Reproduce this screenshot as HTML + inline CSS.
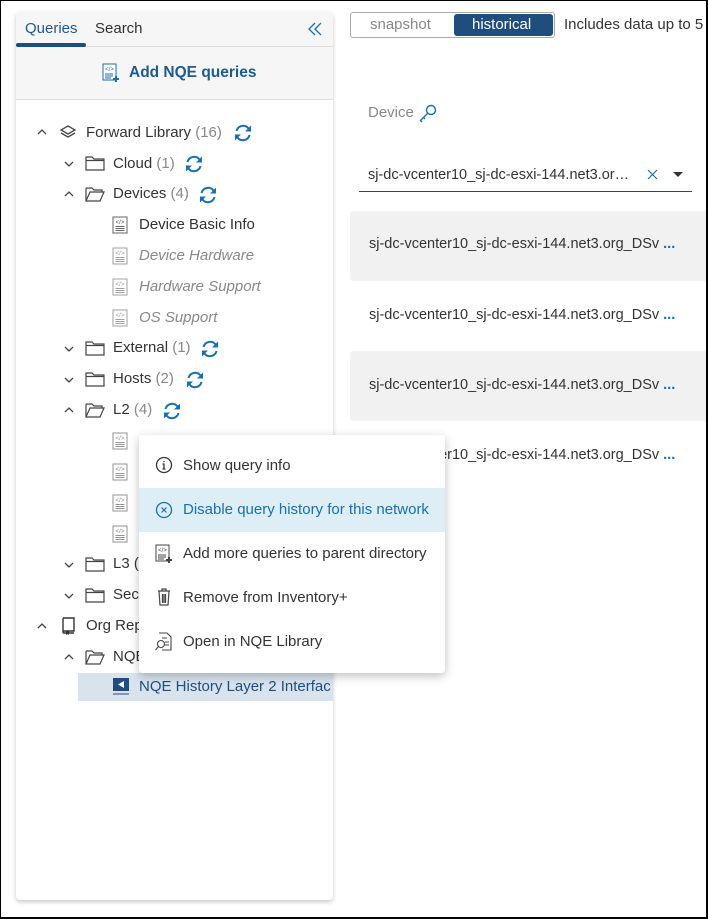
<!DOCTYPE html>
<html><head><meta charset="utf-8"><style>
*{box-sizing:border-box;margin:0;padding:0}
body{width:708px;height:919px;background:#fff;font-family:"Liberation Sans",sans-serif;position:relative;overflow:hidden;color:#333}
.frame{position:absolute;left:0;top:0;width:708px;height:919px;border:1px solid #000;border-right-width:2px;border-bottom-width:2px;z-index:50;pointer-events:none}
.panel{position:absolute;left:16px;top:12px;width:317px;height:888px;background:#fff;border-radius:4px;box-shadow:0 2px 5px rgba(0,0,0,.22);overflow:hidden}
.tabs{position:absolute;left:0;top:0;width:317px;height:35px;background:#f6f6f6;border-bottom:1px solid #ddd}
.tab{position:absolute;top:8px;font-size:15px}
.add{position:absolute;left:0;top:35px;width:317px;height:53px;background:#f6f6f6;border-bottom:1px solid #ddd}
.t{position:absolute;font-size:15px;line-height:18px;white-space:nowrap}
.g{color:#888}
.it{font-style:italic;color:#888}
.ico{position:absolute}
.row{position:absolute;left:350px;width:358px;height:70px;border-radius:3px}
.rt{position:absolute;left:369px;font-size:14.5px;color:#333;white-space:nowrap}
.menu{position:absolute;left:139px;top:435px;width:306px;height:238px;background:#fff;border-radius:4px;box-shadow:0 3px 10px rgba(0,0,0,.25);z-index:10}
.mi{position:absolute;left:0;width:306px;height:44px}
.mi span{position:absolute;left:44px;top:13px;font-size:15px;white-space:nowrap;color:#333}
</style></head><body>
<svg width="0" height="0" style="position:absolute"><defs>
<symbol id="sync" viewBox="0 0 20 20"><path d="M3.5 8A6.8 6.8 0 0 1 15.5 5.5M16.5 12A6.8 6.8 0 0 1 4.5 14.5" fill="none" stroke="#1a6fb0" stroke-width="2"/><path d="M18 2.5v6h-6z" fill="#1a6fb0"/><path d="M2 17.5v-6h6z" fill="#1a6fb0"/></symbol>
<symbol id="doc" viewBox="0 0 16 18"><rect x="1" y="1" width="14" height="16" fill="#fff" stroke="#666" stroke-width="1"/><text x="8" y="8" font-size="6" text-anchor="middle" fill="#555" font-family="Liberation Sans">&lt;/&gt;</text><path d="M3.5 10.5h9M3.5 12.5h9M3.5 14.5h9" stroke="#666" stroke-width="1"/></symbol>
<symbol id="fold" viewBox="0 0 20 16"><path d="M1 2h6l2 2h10v11H1z" fill="none" stroke="#444" stroke-width="1.2"/><path d="M1 5.5h18" stroke="#444" stroke-width="1.2"/></symbol>
<symbol id="fopen" viewBox="0 0 20 16"><path d="M1 2h6l2 2h8v2" fill="none" stroke="#444" stroke-width="1.2"/><path d="M1 2v13h14l4-9H5L1 15" fill="none" stroke="#444" stroke-width="1.2"/></symbol>
<symbol id="down" viewBox="0 0 10 6"><path d="M1 1l4 4 4-4" fill="none" stroke="#444" stroke-width="1.3"/></symbol>
<symbol id="up" viewBox="0 0 10 6"><path d="M1 5l4-4 4 4" fill="none" stroke="#444" stroke-width="1.3"/></symbol>
</defs></svg>

<div class="panel">
 <div class="tabs">
  <div class="tab" style="left:9px;color:#1f5a8c">Queries</div>
  <div style="position:absolute;left:0;top:31px;width:70px;height:4px;background:#1f4e7e;border-radius:2px"></div>
  <div class="tab" style="left:79px;color:#333">Search</div>
  <svg style="position:absolute;left:292px;top:10px" width="14" height="14" viewBox="0 0 14 14"><path d="M7 1L1 7l6 6M13 1L7 7l6 6" fill="none" stroke="#1a6fb0" stroke-width="1.3"/></svg>
 </div>
 <div class="add">
  <svg style="position:absolute;left:86px;top:16px" width="18" height="20" viewBox="0 0 18 20"><rect x="1" y="1" width="13" height="16" fill="#fff" stroke="#1a6fb0"/><text x="7.5" y="8" font-size="6" text-anchor="middle" fill="#1a6fb0">&lt;/&gt;</text><path d="M3 11h8M3 13h8M3 15h6" stroke="#1a6fb0"/><path d="M14 13v6M11 16h6" stroke="#1a6fb0" stroke-width="2"/></svg>
  <div class="t" style="left:113px;top:17px;color:#1f5a8c;font-weight:bold;font-size:15.5px">Add NQE queries</div>
 </div>
</div>

<!-- tree -->
<svg class="ico" style="left:37px;top:129px" width="10" height="6"><use href="#up"/></svg>
<svg class="ico" style="left:59px;top:124px" width="18" height="16" viewBox="0 0 18 16"><path d="M9 2l7 4-7 4-7-4z M2 9l7 4 7-4" fill="none" stroke="#444" stroke-width="1.3"/></svg>
<div class="t" style="left:86px;top:124px">Forward Library <span class="g">(16)</span></div>
<svg class="ico" style="left:233px;top:123px" width="20" height="20"><use href="#sync"/></svg>

<svg class="ico" style="left:64px;top:161px" width="10" height="6"><use href="#down"/></svg>
<svg class="ico" style="left:85px;top:155px" width="20" height="16"><use href="#fold"/></svg>
<div class="t" style="left:113px;top:155px">Cloud <span class="g">(1)</span></div>
<svg class="ico" style="left:184px;top:154px" width="20" height="20"><use href="#sync"/></svg>

<svg class="ico" style="left:64px;top:191px" width="10" height="6"><use href="#up"/></svg>
<svg class="ico" style="left:85px;top:186px" width="20" height="16"><use href="#fopen"/></svg>
<div class="t" style="left:113px;top:185px">Devices <span class="g">(4)</span></div>
<svg class="ico" style="left:198px;top:185px" width="20" height="20"><use href="#sync"/></svg>

<svg class="ico" style="left:112px;top:216px" width="16" height="18"><use href="#doc"/></svg>
<div class="t" style="left:139px;top:216px">Device Basic Info</div>
<svg class="ico" style="left:112px;top:247px" width="16" height="18" opacity=".6"><use href="#doc"/></svg>
<div class="t it" style="left:139px;top:247px">Device Hardware</div>
<svg class="ico" style="left:112px;top:278px" width="16" height="18" opacity=".6"><use href="#doc"/></svg>
<div class="t it" style="left:139px;top:278px">Hardware Support</div>
<svg class="ico" style="left:112px;top:309px" width="16" height="18" opacity=".6"><use href="#doc"/></svg>
<div class="t it" style="left:139px;top:309px">OS Support</div>

<svg class="ico" style="left:64px;top:346px" width="10" height="6"><use href="#down"/></svg>
<svg class="ico" style="left:85px;top:340px" width="20" height="16"><use href="#fold"/></svg>
<div class="t" style="left:113px;top:339px">External <span class="g">(1)</span></div>
<svg class="ico" style="left:200px;top:339px" width="20" height="20"><use href="#sync"/></svg>

<svg class="ico" style="left:64px;top:377px" width="10" height="6"><use href="#down"/></svg>
<svg class="ico" style="left:85px;top:371px" width="20" height="16"><use href="#fold"/></svg>
<div class="t" style="left:113px;top:370px">Hosts <span class="g">(2)</span></div>
<svg class="ico" style="left:185px;top:370px" width="20" height="20"><use href="#sync"/></svg>

<svg class="ico" style="left:64px;top:407px" width="10" height="6"><use href="#up"/></svg>
<svg class="ico" style="left:85px;top:402px" width="20" height="16"><use href="#fopen"/></svg>
<div class="t" style="left:113px;top:401px">L2 <span class="g">(4)</span></div>
<svg class="ico" style="left:162px;top:401px" width="20" height="20"><use href="#sync"/></svg>

<svg class="ico" style="left:112px;top:432px" width="16" height="18" opacity=".7"><use href="#doc"/></svg>
<svg class="ico" style="left:112px;top:463px" width="16" height="18" opacity=".7"><use href="#doc"/></svg>
<svg class="ico" style="left:112px;top:494px" width="16" height="18" opacity=".7"><use href="#doc"/></svg>
<svg class="ico" style="left:112px;top:525px" width="16" height="18" opacity=".7"><use href="#doc"/></svg>

<svg class="ico" style="left:64px;top:562px" width="10" height="6"><use href="#down"/></svg>
<svg class="ico" style="left:85px;top:556px" width="20" height="16"><use href="#fold"/></svg>
<div class="t" style="left:113px;top:555px">L3 (</div>
<svg class="ico" style="left:64px;top:593px" width="10" height="6"><use href="#down"/></svg>
<svg class="ico" style="left:85px;top:587px" width="20" height="16"><use href="#fold"/></svg>
<div class="t" style="left:113px;top:586px">Sec</div>

<svg class="ico" style="left:37px;top:623px" width="10" height="6"><use href="#up"/></svg>
<svg class="ico" style="left:61px;top:617px" width="14" height="18" viewBox="0 0 14 18"><path d="M2 1h11v13H3a1 1 0 0 0 0 2h10M2 1v14" fill="none" stroke="#333" stroke-width="1.4"/><path d="M5 14v4l1.5-1 1.5 1v-4" fill="#333"/></svg>
<div class="t" style="left:86px;top:617px">Org Rep</div>

<svg class="ico" style="left:64px;top:654px" width="10" height="6"><use href="#up"/></svg>
<svg class="ico" style="left:85px;top:649px" width="20" height="16"><use href="#fopen"/></svg>
<div class="t" style="left:113px;top:648px">NQE</div>

<div style="position:absolute;left:78px;top:673px;width:255px;height:28px;background:#d9e3ee"></div>
<svg class="ico" style="left:112px;top:677px" width="18" height="20" viewBox="0 0 18 20"><rect x="1" y="1" width="16" height="13" fill="#1f4e7e"/><path d="M12 4v7l-6-3.5z" fill="#fff"/><path d="M1 17h16" stroke="#1f4e7e" stroke-width="1"/></svg>
<div class="t" style="left:139px;top:678px;color:#1f4e7e">NQE History Layer 2 Interfac</div>

<!-- right -->
<div style="position:absolute;left:350px;top:12px;width:205px;height:26px;border:1px solid #aaa;border-radius:3px"></div>
<div style="position:absolute;left:454px;top:14px;width:99px;height:22px;background:#1f4e7e;border-radius:3px"></div>
<div class="t" style="left:370px;top:16px;color:#888">snapshot</div>
<div class="t" style="left:472px;top:16px;color:#fff">historical</div>
<div class="t" style="left:564px;top:16px;color:#333">Includes data up to 5</div>

<div class="t" style="left:368px;top:104px;color:#888">Device</div>
<svg class="ico" style="left:418px;top:103px" width="20" height="20" viewBox="0 0 20 20"><circle cx="13" cy="7" r="4.5" fill="none" stroke="#1a6fb0" stroke-width="1.4"/><path d="M10 10L2.5 17.5l1.5 1.5M5.5 14.5l1.5 1.5" fill="none" stroke="#1a6fb0" stroke-width="1.4"/></svg>

<div class="t" style="left:368px;top:166px;font-size:14.5px">sj-dc-vcenter10_sj-dc-esxi-144.net3.or…</div>
<svg class="ico" style="left:647px;top:169px" width="11" height="11"><path d="M1 1l9 9M10 1l-9 9" stroke="#1a6fb0" stroke-width="1.2"/></svg>
<svg class="ico" style="left:673px;top:172px" width="10" height="6"><path d="M0 0h10L5 5z" fill="#333"/></svg>
<div style="position:absolute;left:359px;top:191px;width:333px;height:1px;background:#1f4e7e"></div>

<div class="row" style="top:211px;background:#f1f1f1"></div>
<div class="row" style="top:351px;background:#f1f1f1"></div>
<div class="rt" style="top:236px">sj-dc-vcenter10_sj-dc-esxi-144.net3.org_DSv <b style="color:#1a6fb0">...</b></div>
<div class="rt" style="top:307px">sj-dc-vcenter10_sj-dc-esxi-144.net3.org_DSv <b style="color:#1a6fb0">...</b></div>
<div class="rt" style="top:377px">sj-dc-vcenter10_sj-dc-esxi-144.net3.org_DSv <b style="color:#1a6fb0">...</b></div>
<div class="rt" style="top:447px">sj-dc-vcenter10_sj-dc-esxi-144.net3.org_DSv <b style="color:#1a6fb0">...</b></div>

<!-- menu -->
<div class="menu">
 <div class="mi" style="top:9px"><svg style="position:absolute;left:16px;top:12px" width="18" height="18" viewBox="0 0 18 18"><circle cx="9" cy="9" r="7.5" fill="none" stroke="#333" stroke-width="1.3"/><path d="M9 5v1M7.5 8H9v5M7.5 13h3" stroke="#333" stroke-width="1.3" fill="none"/></svg><span>Show query info</span></div>
 <div class="mi" style="top:53px;background:#ddeef7"><svg style="position:absolute;left:16px;top:13px" width="18" height="18" viewBox="0 0 18 18"><circle cx="9" cy="9" r="7.5" fill="none" stroke="#1a6fb0" stroke-width="1.3"/><path d="M6.5 6.5l5 5M11.5 6.5l-5 5" stroke="#1a6fb0" stroke-width="1.2"/></svg><span style="color:#1a6fb0">Disable query history for this network</span></div>
 <div class="mi" style="top:97px"><svg style="position:absolute;left:16px;top:12px" width="18" height="20" viewBox="0 0 18 20"><rect x="1" y="1" width="13" height="16" fill="#fff" stroke="#444"/><text x="7.5" y="8" font-size="6" text-anchor="middle" fill="#444">&lt;/&gt;</text><path d="M3 11h8M3 13h8M3 15h6" stroke="#444"/><path d="M14 13v6M11 16h6" stroke="#444" stroke-width="2"/></svg><span>Add more queries to parent directory</span></div>
 <div class="mi" style="top:141px"><svg style="position:absolute;left:18px;top:12px" width="14" height="18" viewBox="0 0 14 18"><path d="M1 3h12M5 3V1h4v2M2 3l1 14h8l1-14M5.5 6v9M7 6v9M8.5 6v9" fill="none" stroke="#444" stroke-width="1.2"/></svg><span>Remove from Inventory+</span></div>
 <div class="mi" style="top:185px"><svg style="position:absolute;left:16px;top:12px" width="18" height="20" viewBox="0 0 18 20"><path d="M4 1h8l4 4v13H7" fill="none" stroke="#444" stroke-width="1.1"/><circle cx="6" cy="12" r="3.5" fill="none" stroke="#444" stroke-width="1.1"/><path d="M3.5 14.5L0.5 18M10 10h4M10 13h4M7 6h5" stroke="#444" stroke-width="1.1"/></svg><span>Open in NQE Library</span></div>
</div>

<div class="frame"></div>
</body></html>
